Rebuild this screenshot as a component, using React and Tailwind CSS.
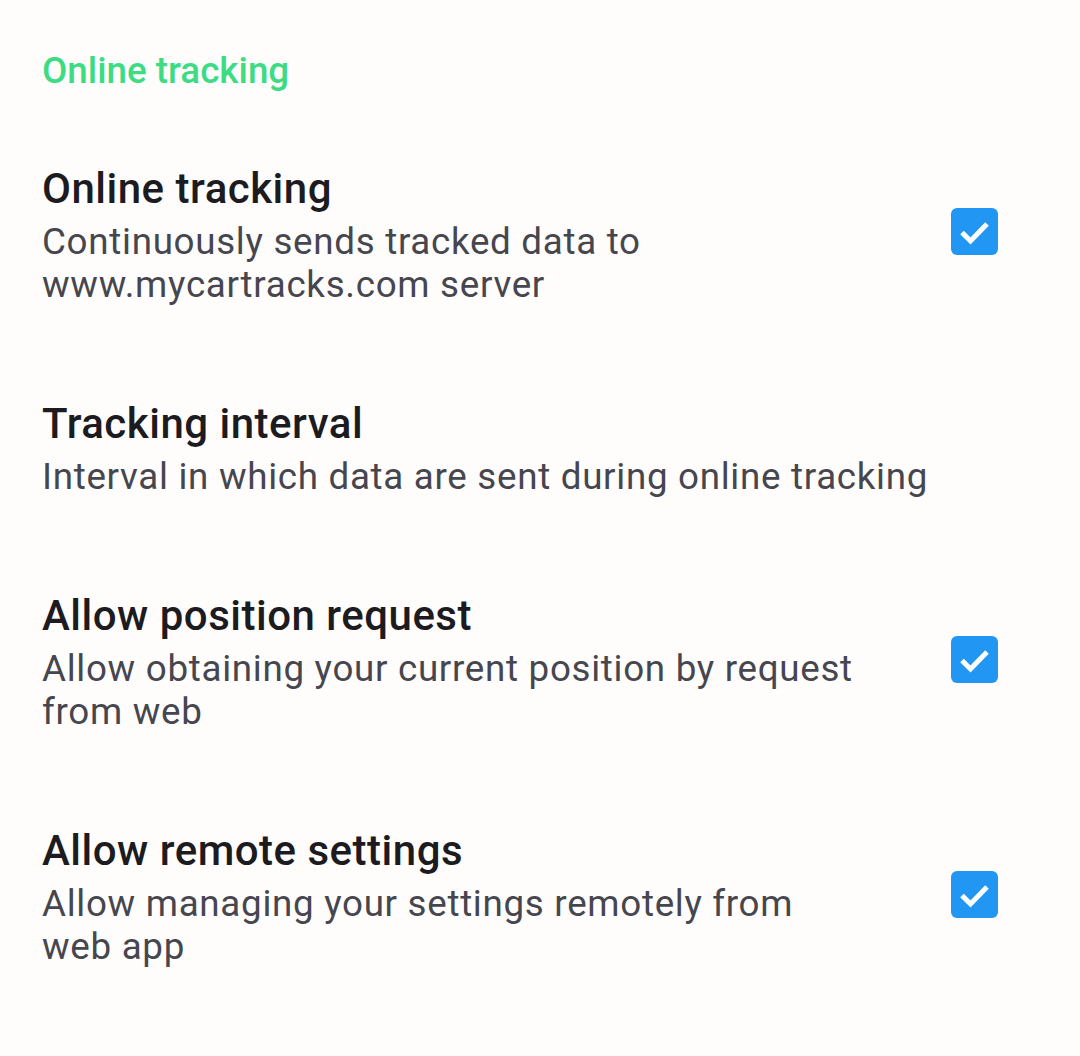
const items = [
  {
    title: 'Online tracking',
    summary: 'Continuously sends tracked data to www.mycartracks.com server',
    checked: true,
    lift: true,
  },
  {
    title: 'Tracking interval',
    summary: 'Interval in which data are sent during online tracking',
  },
  {
    title: 'Allow position request',
    summary: 'Allow obtaining your current position by request from web',
    checked: true,
  },
  {
    title: 'Allow remote settings',
    summary: 'Allow managing your settings remotely from web app',
    checked: true,
  },
];

const Checkbox = () => (
  <div className="w-[47px] h-[47px] rounded-[6px] bg-[#2196f3] flex items-center justify-center shrink-0">
    <svg width="47" height="47" viewBox="0 0 47 47">
      <polyline
        points="11,24.5 19.5,33 36,16"
        fill="none"
        stroke="#ffffff"
        strokeWidth="5"
        strokeLinecap="butt"
        strokeLinejoin="miter"
      />
    </svg>
  </div>
);

export default function App() {
  return (
    <div
      className="w-[1080px] h-[1056px] bg-[#fffdfb] pl-[42px] pr-[82px]"
      style={{ fontFamily: 'Roboto, "Noto Sans", sans-serif' }}
    >
      <div className="pt-[49px] pb-[25px]">
        <h2 className="text-[36.75px] leading-[43px] font-medium text-[#3ddc84]">Online tracking</h2>
      </div>

      {items.map((item) => (
        <div key={item.title} className="flex items-center py-[46.5px]">
          <div className="flex-1 min-w-0">
            <div className="text-[42px] leading-[49px] font-medium text-[#1c1b1f] tracking-[0.5px]">
              {item.title}
            </div>
            <div className="mt-[7px] text-[36.75px] leading-[43px] text-[#46464f] tracking-[0.7px]">
              {item.summary}
            </div>
          </div>
          {item.checked && (
            <div className={item.lift ? 'ml-[86px] mb-[7px]' : 'ml-[86px] mb-[5px]'}>
              <Checkbox />
            </div>
          )}
        </div>
      ))}
    </div>
  );
}
